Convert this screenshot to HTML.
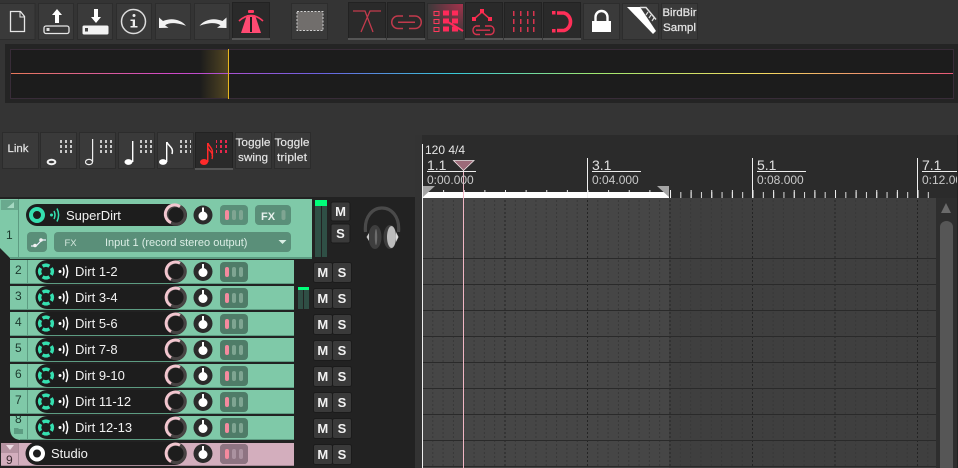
<!DOCTYPE html>
<html><head><meta charset="utf-8"><style>
html,body{margin:0;padding:0;background:#343434;width:958px;height:468px;overflow:hidden}
svg{display:block;font-family:"Liberation Sans",sans-serif}
</style></head><body>
<svg width="958" height="468" viewBox="0 0 958 468" xmlns="http://www.w3.org/2000/svg">
<defs>
<linearGradient id="rb" x1="0" x2="1" y1="0" y2="0">
<stop offset="0" stop-color="#e8785a"/><stop offset=".17" stop-color="#d048c8"/><stop offset=".33" stop-color="#6a62e0"/><stop offset=".47" stop-color="#38c8d8"/><stop offset=".62" stop-color="#a0e870"/><stop offset=".8" stop-color="#f4d860"/><stop offset="1" stop-color="#e85878"/>
</linearGradient>
<linearGradient id="yg" x1="0" x2="1" y1="0" y2="0"><stop offset="0" stop-color="#c8a030" stop-opacity="0"/><stop offset="1" stop-color="#c8a030" stop-opacity=".32"/></linearGradient>
<radialGradient id="rg" cx="1" cy="0" r="1"><stop offset="0" stop-color="#ff2a5a" stop-opacity=".55"/><stop offset="1" stop-color="#ff2a5a" stop-opacity="0"/></radialGradient>
<pattern id="vf" x="422" y="0" width="10.3125" height="4" patternUnits="userSpaceOnUse"><rect x="0" y="0" width="1" height="2" fill="#383838"/></pattern>
<pattern id="vb" x="422" y="0" width="82.5" height="4" patternUnits="userSpaceOnUse"><rect x="0" y="0" width="1" height="2" fill="#242424"/></pattern>
<pattern id="t1" x="422.5" y="0" width="10.3125" height="10" patternUnits="userSpaceOnUse"><rect x="0" y="0" width="1" height="10" fill="#ddd"/></pattern>
<pattern id="t2" x="422.5" y="0" width="20.625" height="10" patternUnits="userSpaceOnUse"><rect x="0" y="0" width="1" height="10" fill="#eee"/></pattern>
<pattern id="dots" width="5" height="5" patternUnits="userSpaceOnUse"><rect width="2" height="3" fill="#c8c8c8"/></pattern>
<pattern id="dotsr" width="5" height="5" patternUnits="userSpaceOnUse"><rect width="2" height="3" fill="#e8284c"/></pattern>

<g id="strip">
<path d="M47 0a11 11 0 0 0 0 23H175a11 11 0 0 0 0-23z" fill="#1d1d1d"/>
<circle cx="176" cy="11.500" r="9.200" fill="none" stroke="#474343" stroke-width="3.200"/>
<circle cx="203" cy="11.500" r="9.500" fill="#2b2b2b"/>
<circle cx="203" cy="12.500" r="4.500" fill="#fff"/><rect x="202" y="4" width="2" height="6" fill="#fff"/>
<rect x="220" y="2" width="28" height="20" rx="4" fill="#4f7c68"/>
<rect x="225" y="7" width="4" height="10" rx="2" fill="#f48a9e"/>
<rect x="232" y="7" width="4" height="10" rx="2" fill="#7fa592"/>
<rect x="239" y="7" width="4" height="10" rx="2" fill="#7fa592"/>
</g>
<g id="arc"><path d="M171 19.600A9.200 9.200 0 1 1 180 3.200" fill="none" stroke="#f2c6cf" stroke-width="3"/></g>
<g id="rec">
<g fill="none" stroke="#35e0b0" stroke-width="3.400">
<path d="M42.600 6.200A6.300 6.300 0 0 1 49.400 6.200"/><path d="M42.600 16.800A6.300 6.300 0 0 0 49.400 16.800"/><path d="M40.700 8.100A6.300 6.300 0 0 0 40.700 14.900"/><path d="M51.300 8.100A6.300 6.300 0 0 1 51.300 14.900"/>
</g>
<circle cx="60" cy="11.500" r="1.500" fill="#fff"/>
<g fill="none" stroke="#fff" stroke-width="1.500"><path d="M63 7.500q2 4 0 8"/><path d="M66 5q3.200 6.500 0 13"/></g>
</g>
<g id="ms">
<rect x="0.500" y="0.500" width="19" height="20" rx="2" fill="#3a3a3a" stroke="#1b1b1b"/>
<rect x="19.500" y="0.500" width="19" height="20" rx="2" fill="#3a3a3a" stroke="#1b1b1b"/>
<text x="9.800" y="15" text-anchor="middle" font-size="13" font-weight="700" fill="#f2f2f2">M</text>
<text x="29" y="15" text-anchor="middle" font-size="13" font-weight="700" fill="#f2f2f2">S</text>
</g>
</defs>

<rect width="958" height="468" fill="#343434"/>

<!-- toolbar top buttons -->
<g fill="#3a3a3a" stroke="#2d2d2d" stroke-width="1">
<rect x="-1" y="3.500" width="36" height="36"/><rect x="38.500" y="3.500" width="35" height="36"/><rect x="77.500" y="3.500" width="35" height="36"/><rect x="116.500" y="3.500" width="35" height="36"/><rect x="155.500" y="3.500" width="35" height="36"/><rect x="194.500" y="3.500" width="35" height="36"/>
<rect x="291.500" y="3.500" width="36" height="36"/><rect x="427.500" y="3.500" width="36" height="36"/><rect x="583.500" y="3.500" width="36" height="36"/><rect x="622.500" y="3.500" width="36" height="36"/><rect x="661.500" y="3.500" width="36" height="36"/>
</g>
<g fill="#2a2a2a" stroke="#222" stroke-width="1">
<rect x="232.500" y="2.500" width="37" height="37"/><rect x="348.500" y="2.500" width="37" height="37"/><rect x="387.500" y="2.500" width="37" height="37"/><rect x="465.500" y="2.500" width="37" height="37"/><rect x="504.500" y="2.500" width="37" height="37"/><rect x="543.500" y="2.500" width="37" height="37"/>
</g>
<g fill="#555"><rect x="232" y="38" width="38" height="2"/><rect x="348" y="38" width="38" height="2"/><rect x="387" y="38" width="38" height="2"/><rect x="465" y="38" width="38" height="2"/><rect x="504" y="38" width="38" height="2"/><rect x="543" y="38" width="38" height="2"/></g>

<!-- new -->
<path d="M10.500 11.500h10l4 5v15h-14z" fill="none" stroke="#e6e6e6" stroke-width="1.300"/><path d="M20 11v6h5" fill="none" stroke="#e6e6e6"/>
<!-- open -->
<path d="M57 9l-5 6h3v8h4v-8h3z" fill="#fff"/><rect x="44" y="26" width="25" height="7.500" rx="2" fill="none" stroke="#e6e6e6" stroke-width="1.300"/><rect x="46.500" y="28" width="3" height="3" fill="#ddd"/>
<!-- save -->
<path d="M96 23l5-6h-3v-8h-4v8h-3z" fill="#fff"/><rect x="82.500" y="25.500" width="26" height="9" rx="1.500" fill="#f2f2f2"/><rect x="85" y="28" width="3" height="3.500" fill="#444"/>
<!-- info -->
<circle cx="133.500" cy="21.500" r="12" fill="none" stroke="#dcdcdc" stroke-width="1.500"/><circle cx="134" cy="15.500" r="1.500" fill="#eee"/><path d="M130.500 19.500h4.500v6.500h2.500v1.500h-7v-1.500h2.200v-5h-2.200z" fill="#eee"/>
<!-- undo -->
<path d="M159 17.500l0 10.500 9.500-.3-3.500-2.500c5-3 11-2.500 21 .5-5-6-14-8.500-23-4.700l-4-3.500z" fill="#f2f2f2"/>
<!-- redo -->
<path d="M226.500 17.500l0 10.500-9.500-.3 3.500-2.500c-5-3-11-2.500-21 .5 5-6 14-8.500 23-4.700l4-3.500z" fill="#f2f2f2"/>
<!-- metronome -->
<path d="M247 15h8l6 18h-20z" fill="#ff4a72"/><rect x="250" y="17" width="2" height="15" fill="#1e1e1e"/>
<path d="M239 21q12-11 24 0" fill="none" stroke="#ff3a62" stroke-width="1.600"/><rect x="248" y="10" width="6" height="3" rx="1" fill="#ff3a62"/>
<!-- marquee -->
<rect x="297" y="11.500" width="26" height="19" fill="#716e6c" stroke="#cfcfcf" stroke-dasharray="2 1.500"/>
<!-- x crossfade -->
<path d="M353 11h12l8 21M381 11h-11l-9 21" fill="none" stroke="#c23a4c" stroke-width="1.300"/>
<!-- link -->
<path d="M403 16h-5a6.200 6.200 0 0 0 0 12.500h5M409 16h6a6.200 6.200 0 0 1 0 12.500h-6M398 22.300h17" fill="none" stroke="#c23a4c" stroke-width="1.500"/>
<!-- grid-->
<g fill="#ff2a5a"><rect x="434" y="11.500" width="5" height="4" fill="none" stroke="#ff3a5c"/><rect x="443" y="10.500" width="6" height="5"/><rect x="452" y="10.500" width="6" height="5"/><rect x="434" y="19.500" width="5" height="4" fill="none" stroke="#ff3a5c"/><rect x="443" y="18.500" width="6" height="5"/><rect x="452" y="18.500" width="6" height="5"/><rect x="434" y="27.500" width="5" height="4" fill="none" stroke="#ff3a5c"/><rect x="443" y="26.500" width="6" height="5"/><rect x="452" y="26.500" width="6" height="5"/></g>
<rect x="427" y="4" width="36" height="30" fill="url(#rg)"/><path d="M448 22l15 9" stroke="#ff2a5a" stroke-width="2"/>
<!-- env link -->
<path d="M474 19l8-7 8 7" fill="none" stroke="#e8304e" stroke-width="1.500"/><rect x="472" y="17" width="4" height="4" fill="#ff2a50"/><rect x="480" y="9" width="4" height="4" fill="#ff2a50"/><rect x="488" y="17" width="4" height="4" fill="#ff2a50"/>
<path d="M480 26h-4a4.500 4.500 0 0 0 0 8.500h4M485 26h6a4.500 4.500 0 0 1 0 8.500h-6M476 30.200h14" fill="none" stroke="#d8344e" stroke-width="1.400"/>
<!-- grid dashes -->
<g fill="#d8344e"><rect x="513" y="11" width="1.500" height="5"/><rect x="520" y="11" width="1.500" height="5"/><rect x="527" y="11" width="1.500" height="5"/><rect x="533" y="11" width="1.500" height="5"/><rect x="513" y="19" width="1.500" height="5"/><rect x="520" y="19" width="1.500" height="5"/><rect x="527" y="19" width="1.500" height="5"/><rect x="533" y="19" width="1.500" height="5"/><rect x="513" y="27" width="1.500" height="5"/><rect x="520" y="27" width="1.500" height="5"/><rect x="527" y="27" width="1.500" height="5"/><rect x="533" y="27" width="1.500" height="5"/></g>
<!-- magnet -->
<path d="M557 13h7a8.500 9 0 0 1 0 17.500h-7" fill="none" stroke="#ff2f58" stroke-width="3.600"/><rect x="552" y="11" width="3.500" height="3.500" fill="#ff2f58"/><rect x="552" y="29" width="3.500" height="3.500" fill="#ff2f58"/>
<!-- lock -->
<rect x="592" y="21" width="19" height="11" fill="#fff"/><path d="M595.500 21v-4a6 6 0 0 1 12 0v4" fill="none" stroke="#fff" stroke-width="2.400"/>
<!-- ruler icon -->
<path d="M627 7H640L656 31 653 34z" fill="#fff"/><path d="M640 7.500h6l10 12" fill="none" stroke="#e0e0e0" stroke-width="1.500"/><path d="M648 12l-2 3M651 15l-2 3M654 18l-2 3" stroke="#ddd" stroke-width="1.200"/>
<!-- BirdBir text -->
<text x="679.500" y="16" text-anchor="middle" font-size="11" fill="#e4e4e4" stroke="#e4e4e4" stroke-width=".25" textLength="34" lengthAdjust="spacingAndGlyphs">BirdBir</text>
<text x="679.500" y="31" text-anchor="middle" font-size="11" fill="#e4e4e4" stroke="#e4e4e4" stroke-width=".25" textLength="33" lengthAdjust="spacingAndGlyphs">Sampl</text>

<!-- overview -->
<rect x="5" y="44" width="953" height="59" fill="#242424"/>
<rect x="10.500" y="49.500" width="943" height="49" fill="#1c1c1c" stroke="#382c38"/>
<rect x="200" y="50" width="28" height="48" fill="url(#yg)"/>
<rect x="11" y="73" width="942" height="1" fill="url(#rb)"/>
<rect x="228" y="49" width="1" height="50" fill="#e8b820"/>

<!-- note toolbar -->
<g fill="#3a3a3a" stroke="#2c2c2c"><rect x="2.500" y="132.500" width="36" height="36"/><rect x="40.500" y="132.500" width="36" height="36"/><rect x="79.500" y="132.500" width="36" height="36"/><rect x="118.500" y="132.500" width="36" height="36"/><rect x="157.500" y="132.500" width="36" height="36"/><rect x="235.500" y="132.500" width="36" height="36"/><rect x="274.500" y="132.500" width="36" height="36"/></g>
<rect x="195.500" y="132.500" width="37" height="37" fill="#2a2a2a" stroke="#222"/><rect x="195" y="168" width="38" height="2" fill="#555"/>
<text x="18" y="152" text-anchor="middle" font-size="11" fill="#e4e4e4" stroke="#e4e4e4" stroke-width=".2" textLength="21" lengthAdjust="spacingAndGlyphs">Link</text>
<g fill="url(#dots)"><rect x="60" y="138" width="14" height="15"/><rect x="99" y="138" width="14" height="15"/><rect x="138" y="138" width="14" height="15"/><rect x="177" y="138" width="14" height="15"/></g>
<rect x="216" y="138" width="14" height="15" fill="url(#dotsr)"/>
<ellipse cx="51.500" cy="162" rx="3.800" ry="2.200" fill="none" stroke="#f2f2f2" stroke-width="2"/>
<ellipse cx="89" cy="162" rx="3.500" ry="2.600" fill="none" stroke="#eee" stroke-width="1.200"/><rect x="92" y="139" width="1.200" height="23" fill="#eee"/>
<ellipse cx="128.500" cy="162" rx="4" ry="2.900" fill="#fff"/><rect x="132" y="141" width="1.400" height="21" fill="#fff"/>
<ellipse cx="163" cy="162" rx="4" ry="2.900" fill="#fff"/><rect x="166" y="142" width="1.400" height="20" fill="#fff"/><path d="M167 142c1 4 7 5 5 12" fill="none" stroke="#fff" stroke-width="1.500"/>
<ellipse cx="204" cy="162" rx="4" ry="3" fill="#ff2a2a"/><rect x="207" y="143" width="1.500" height="19" fill="#ff2a2a"/><path d="M208 143c1 4 6 5 4 13M208 148c1 3 6 4 4 11" fill="none" stroke="#ff2a2a" stroke-width="1.400"/>
<g font-size="11" fill="#e6e6e6" text-anchor="middle" stroke="#e6e6e6" stroke-width=".15">
<text x="253" y="146" textLength="35" lengthAdjust="spacingAndGlyphs">Toggle</text><text x="253" y="161" textLength="30" lengthAdjust="spacingAndGlyphs">swing</text>
<text x="292" y="146" textLength="35" lengthAdjust="spacingAndGlyphs">Toggle</text><text x="292" y="161" textLength="30" lengthAdjust="spacingAndGlyphs">triplet</text>
</g>

<!-- mixer bg -->
<rect x="0" y="197" width="415" height="271" fill="#222"/>
<rect x="415" y="135" width="7" height="333" fill="#333"/>

<!-- track1 -->
<path d="M0 199H312V258H10L0 248z" fill="#7fc9a8"/>
<rect x="18" y="199" width="1" height="59" fill="#5d9c82"/><rect x="10" y="257" width="302" height="2" fill="#5d9c82"/>
<rect x="1" y="200" width="17" height="10" fill="#6aa98e"/><path d="M14 202v6H7z" fill="#a6d8c2"/>
<text x="6" y="239" font-size="12" fill="#1d3a2e">1</text>
<path d="M37 204a11 11 0 0 0 0 22H176a11 11 0 0 0 0-22z" fill="#1d1d1d"/>
<circle cx="37" cy="215" r="6" fill="none" stroke="#35e0b0" stroke-width="4"/>
<circle cx="51.500" cy="215" r="1.500" fill="#35e0b0"/>
<g fill="none" stroke="#35e0b0" stroke-width="1.500"><path d="M54 211q2 4 0 8"/><path d="M57 208.500q3.200 6.500 0 13"/></g>
<text x="66" y="220" font-size="13" fill="#f2f2f2">SuperDirt</text>
<circle cx="176" cy="215" r="9.200" fill="none" stroke="#474343" stroke-width="3.200"/>
<path d="M171 222.600A9.200 9.200 0 1 1 180 206.700" fill="none" stroke="#f2c6cf" stroke-width="3"/>
<circle cx="203" cy="215" r="9.500" fill="#2b2b2b"/><circle cx="203" cy="216" r="4.500" fill="#fff"/><rect x="202" y="207.500" width="2" height="6" fill="#fff"/>
<rect x="220" y="205" width="28" height="20" rx="4" fill="#5a8f79"/>
<rect x="225" y="210" width="4" height="10" rx="2" fill="#f48a9e"/><rect x="232" y="210" width="4" height="10" rx="2" fill="#7fa592"/><rect x="239" y="210" width="4" height="10" rx="2" fill="#7fa592"/>
<rect x="255" y="205" width="36" height="20" rx="4" fill="#5a8f79"/>
<text x="261" y="220" font-size="11" font-weight="700" fill="#e8f2ee">FX</text><rect x="281.500" y="210" width="4" height="10" rx="2" fill="#7fa592"/>
<rect x="27" y="232" width="20" height="20" rx="4" fill="#5a8f79"/>
<path d="M31 246h5l6-6h4" fill="none" stroke="#eef" stroke-width="1.200"/><circle cx="35" cy="245.500" r="1.800" fill="#f2f2f2"/><circle cx="41" cy="240" r="1.800" fill="#f2f2f2"/>
<rect x="54" y="232" width="237" height="20" rx="4" fill="#5a8f79"/>
<text x="64.500" y="246" font-size="9.500" fill="#d4e8de">FX</text>
<text x="105" y="246" font-size="11" fill="#dbeee5">Input 1 (record stereo output)</text>
<path d="M278.500 240h8l-4 4z" fill="#dbeee5"/>

<!-- tracks 2-8 -->
<path d="M10 260H294V283.500H10z" fill="#7fc9a8"/><path d="M10 286H294V309.500H10z" fill="#7fc9a8"/><path d="M10 312H294V335.500H10z" fill="#7fc9a8"/><path d="M10 338H294V361.500H10z" fill="#7fc9a8"/><path d="M10 364H294V387.500H10z" fill="#7fc9a8"/><path d="M10 390H294V413.500H10z" fill="#7fc9a8"/><path d="M10 416H294V440H22Q10 440 10 428z" fill="#7fc9a8"/>
<g fill="#5d9c82"><rect x="27" y="260" width="1" height="180"/><rect x="10" y="283" width="284" height="1"/><rect x="10" y="309" width="284" height="1"/><rect x="10" y="335" width="284" height="1"/><rect x="10" y="361" width="284" height="1"/><rect x="10" y="387" width="284" height="1"/><rect x="10" y="413" width="284" height="1"/><rect x="20" y="439" width="274" height="1"/></g>
<g fill="#222"><rect x="10" y="284" width="284" height="2"/><rect x="10" y="310" width="284" height="2"/><rect x="10" y="336" width="284" height="2"/><rect x="10" y="362" width="284" height="2"/><rect x="10" y="388" width="284" height="2"/><rect x="10" y="414" width="284" height="2"/></g>

<g font-size="12" fill="#1d3a2e"><text x="15" y="274">2</text><text x="15" y="300">3</text><text x="15" y="326">4</text><text x="15" y="352">5</text><text x="15" y="378">6</text><text x="15" y="404">7</text><text x="15" y="423">8</text></g>
<path d="M14 428h4l1 1h4v5h-9z" fill="#5d9c82"/>

<use href="#strip" x="0" y="260"/><use href="#arc" x="0" y="260"/><use href="#rec" x="0" y="260"/>
<use href="#strip" x="0" y="286"/><use href="#arc" x="0" y="286"/><use href="#rec" x="0" y="286"/>
<use href="#strip" x="0" y="312"/><use href="#arc" x="0" y="312"/><use href="#rec" x="0" y="312"/>
<use href="#strip" x="0" y="338"/><use href="#arc" x="0" y="338"/><use href="#rec" x="0" y="338"/>
<use href="#strip" x="0" y="364"/><use href="#arc" x="0" y="364"/><use href="#rec" x="0" y="364"/>
<use href="#strip" x="0" y="390"/><use href="#arc" x="0" y="390"/><use href="#rec" x="0" y="390"/>
<use href="#strip" x="0" y="416"/><use href="#arc" x="0" y="416"/><use href="#rec" x="0" y="416"/>
<g font-size="13" fill="#f2f2f2"><text x="75" y="276">Dirt 1-2</text><text x="75" y="302">Dirt 3-4</text><text x="75" y="328">Dirt 5-6</text><text x="75" y="354">Dirt 7-8</text><text x="75" y="380">Dirt 9-10</text><text x="75" y="406">Dirt 11-12</text><text x="75" y="432">Dirt 12-13</text></g>

<!-- track 9 -->
<rect x="1" y="443" width="293" height="23" fill="#d3aebd"/>
<rect x="18" y="443" width="1" height="23" fill="#a98a98"/><rect x="1" y="465" width="293" height="1" fill="#a98a98"/>
<rect x="1" y="443" width="17" height="10" fill="#b593a1"/><path d="M6 445h8l-4 5z" fill="#ecdce3"/>
<text x="6" y="464" font-size="12" fill="#3a2a30">9</text>
<use href="#strip" x="0" y="442"/><use href="#arc" x="0" y="442"/>
<path d="M37 442a11 11 0 0 0 0 23H60V442z" fill="#1d1d1d"/>
<rect x="220" y="444" width="28" height="20" rx="4" fill="#8e7482"/><rect x="225" y="449" width="4" height="10" rx="2" fill="#f48a9e"/><rect x="232" y="449" width="4" height="10" rx="2" fill="#ab92a0"/><rect x="239" y="449" width="4" height="10" rx="2" fill="#ab92a0"/>
<circle cx="37" cy="453.500" r="6" fill="none" stroke="#fff" stroke-width="4"/>
<text x="51" y="458" font-size="13" fill="#f2f2f2">Studio</text>

<!-- meters and M/S -->
<rect x="315" y="200" width="6" height="57" fill="#2f4f45"/><rect x="322" y="200" width="5" height="57" fill="#2f4f45"/><rect x="315" y="200" width="12" height="6" fill="#00ff7a"/>
<rect x="298" y="287" width="5" height="22" fill="#2f4f45"/><rect x="304" y="287" width="5" height="22" fill="#2f4f45"/><rect x="298" y="287" width="11" height="3" fill="#00ff7a"/>
<rect x="331" y="202" width="19" height="19" rx="2" fill="#3a3a3a" stroke="#1b1b1b"/><text x="340.500" y="216" text-anchor="middle" font-size="13" font-weight="700" fill="#f2f2f2">M</text>
<rect x="331" y="224" width="19" height="19" rx="2" fill="#3a3a3a" stroke="#1b1b1b"/><text x="340.500" y="238" text-anchor="middle" font-size="13" font-weight="700" fill="#f2f2f2">S</text>
<use href="#ms" x="313" y="262"/><use href="#ms" x="313" y="288"/><use href="#ms" x="313" y="314"/><use href="#ms" x="313" y="340"/><use href="#ms" x="313" y="366"/><use href="#ms" x="313" y="392"/><use href="#ms" x="313" y="418"/><use href="#ms" x="313" y="444"/>

<!-- headphones -->
<path d="M365.500 232c-3-32 36-32 33 0" fill="none" stroke="#4a4a4a" stroke-width="3.200"/>
<ellipse cx="375" cy="237" rx="6.500" ry="12" fill="#3e3e3e"/><ellipse cx="390" cy="237" rx="6.500" ry="12" fill="#3e3e3e"/>
<path d="M369 233l-2.500 4 2.500 4z" fill="#c8c8c8"/><path d="M396 232l2.500 5-2.500 5z" fill="#d8d8d8"/>
<ellipse cx="376" cy="237" rx="1.200" ry="8" fill="#6c6c6c"/><ellipse cx="391.500" cy="237" rx="4.500" ry="11" fill="#bdbdbd"/>

<!-- timeline -->
<rect x="422" y="135" width="536" height="63" fill="#2b2b2b"/>
<!-- arrange -->
<rect x="423" y="198" width="513" height="270" fill="#3f3f3f"/>
<rect x="423" y="198" width="246" height="270" fill="#464646"/>
<rect x="422" y="198" width="514" height="270" fill="url(#vf)"/>
<rect x="422" y="198" width="514" height="270" fill="url(#vb)"/>
<g fill="#2a2a2a"><rect x="423" y="258" width="513" height="1"/><rect x="423" y="284" width="513" height="1"/><rect x="423" y="310" width="513" height="1"/><rect x="423" y="336" width="513" height="1"/><rect x="423" y="362" width="513" height="1"/><rect x="423" y="388" width="513" height="1"/><rect x="423" y="414" width="513" height="1"/><rect x="423" y="440" width="513" height="1"/><rect x="423" y="466" width="513" height="1"/></g>
<!-- ruler ticks -->
<rect x="423" y="192" width="513" height="6" fill="url(#t1)"/>
<rect x="423" y="190" width="513" height="8" fill="url(#t2)"/>
<rect x="423" y="192" width="246" height="6" fill="#fff"/>
<path d="M423 186h12l-12 11z" fill="#a5a5a5"/><path d="M669 186h-12l12 11z" fill="#a5a5a5"/>
<g fill="#f0f0f0"><rect x="422" y="144" width="1" height="324"/><rect x="587" y="158" width="1" height="40"/><rect x="752" y="158" width="1" height="40"/><rect x="917" y="158" width="1" height="40"/></g>
<rect x="463" y="170" width="1" height="298" fill="#f0b6c4"/>
<text x="425" y="154" font-size="12" fill="#e6e6e6">120 4/4</text>
<g font-size="14" fill="#e0e0e0"><text x="427" y="170">1.1</text><text x="592" y="170">3.1</text><text x="757" y="170">5.1</text><text x="922" y="170">7.1</text></g>
<g fill="#eee"><rect x="427" y="171" width="49" height="1"/><rect x="592" y="171" width="49" height="1"/><rect x="757" y="171" width="49" height="1"/><rect x="922" y="171" width="36" height="1"/></g>
<g font-size="12" fill="#c8c8c8"><text x="427" y="184">0:00.000</text><text x="592" y="184">0:04.000</text><text x="757" y="184">0:08.000</text><text x="922" y="184">0:12.000</text></g>
<path d="M453.500 160.500h20.500l-10.500 10z" fill="#9c6a78" stroke="#f0e6e8" stroke-width=".8"/>

<!-- scrollbar -->
<rect x="936" y="198" width="22" height="270" fill="#2e2e2e"/>
<path d="M946 203l5 10h-10z" fill="#6a6a6a"/>
<path d="M940 227a6.500 6 0 0 1 13 0V468H940z" fill="#565656"/>
<rect x="957" y="135" width="1" height="333" fill="#222"/>
</svg>
</body></html>
